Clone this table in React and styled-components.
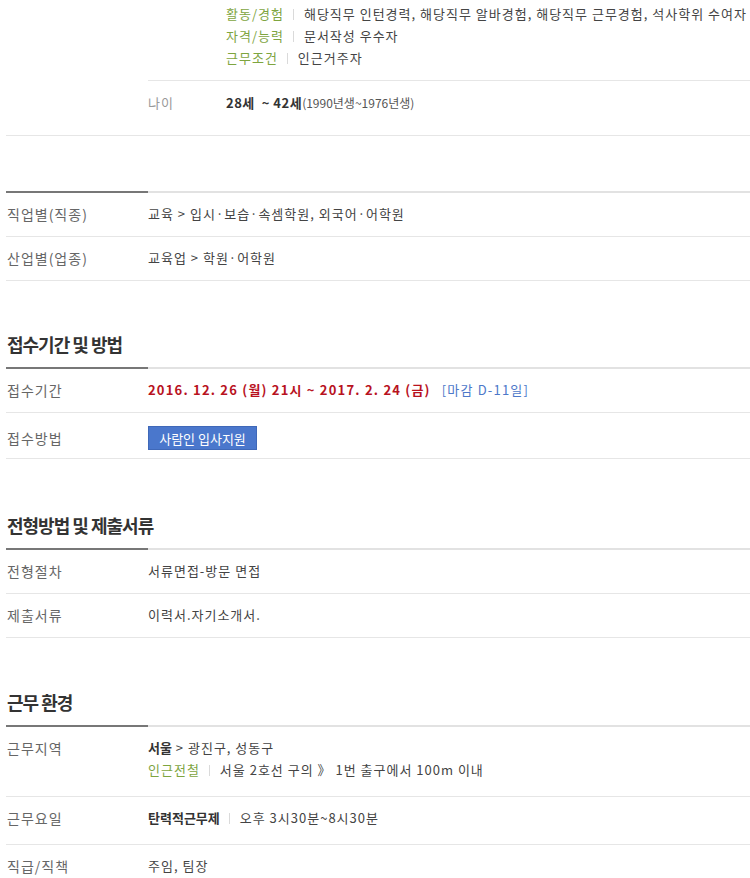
import styled, { createGlobalStyle } from "styled-components";

const Global = createGlobalStyle`
  html, body { margin: 0; padding: 0; background: #fff; }
  body {
    font-family: "Noto Sans CJK KR", "Noto Sans", sans-serif;
    font-size: 13px;
    color: #333;
  }
`;

const Page = styled.div`
  width: 744px;
  padding-left: 6px;
  overflow: hidden;
  height: 878px;
`;

const Section = styled.section`
  margin-top: ${(p) => p.$gap || 0}px;
`;

const Heading = styled.h2`
  margin: 0;
  padding: ${(p) => (p.$empty ? "0" : "0 0 16px 1px")};
  height: ${(p) => (p.$empty ? "2px" : "auto")};
  font-size: 18px;
  line-height: 18px;
  font-weight: 700;
  letter-spacing: -1px;
  color: #333;
  background: linear-gradient(to right, #777 142px, #e2e2e2 142px) bottom / 100% 2px no-repeat;
`;

const Row = styled.div`
  display: grid;
  grid-template-columns: 142px 1fr;
  align-items: ${(p) => (p.$center ? "center" : "start")};
  padding: ${(p) => p.$pt ?? 10}px 0 ${(p) => p.$pb ?? 11}px;
  border-bottom: ${(p) => (p.$last ? "none" : "1px solid #e6e6e6")};
`;

const Label = styled.div`
  font-size: 14px;
  line-height: 22px;
  letter-spacing: 1px;
  color: #666;
  padding-left: 1px;
`;

const Value = styled.div`
  line-height: 22px;
  letter-spacing: 1px;
  color: #444;
`;

const SubTable = styled.div`
  display: flex;
  flex-direction: column;
`;

const SubRow = styled.div`
  display: grid;
  grid-template-columns: 78px 1fr;
  padding: ${(p) => p.$pt ?? 10}px 0 ${(p) => p.$pb ?? 11}px;
  border-bottom: ${(p) => (p.$last ? "none" : "1px solid #e6e6e6")};
`;

const SubLabel = styled.div`
  line-height: 22px;
  letter-spacing: 1px;
  color: #999;
`;

const Line = styled.div`
  line-height: 22px;
  letter-spacing: 1px;
  color: #444;
  white-space: nowrap;
`;

const Tag = styled.span`
  color: #7ea53f;
`;

const Bar = styled.span`
  display: inline-block;
  width: 1px;
  height: 11px;
  background: #dadada;
  margin: 0 10px 0 9px;
  vertical-align: -1px;
`;

const Strong = styled.b`
  font-weight: 700;
  color: #333;
  letter-spacing: ${(p) => (p.$wide ? "0.5px" : "0")};
`;

const Small = styled.span`
  font-size: 12px;
  letter-spacing: 0;
  color: #555;
`;

const Period = styled.span`
  font-weight: 700;
  color: #b8121e;
  letter-spacing: 1.2px;
`;

const Deadline = styled.span`
  margin-left: 11px;
  color: #4d78c9;
  letter-spacing: 1.2px;
`;

const ApplyButton = styled.button`
  height: 24px;
  width: 109px;
  padding: 0;
  border: 1px solid #3f68b8;
  background: #4a77cc;
  color: #fff;
  font-family: inherit;
  font-size: 13px;
  cursor: pointer;
`;

function Tagged({ tag, children }) {
  return (
    <Line>
      <Tag>{tag}</Tag>
      <Bar />
      {children}
    </Line>
  );
}

export default function App() {
  return (
    <Page>
      <Global />
      <Section>
        <Row $pt={0} $pb={0}>
          <div />
          <SubTable>
            <SubRow $pt={3} $pb={11}>
              <div />
              <div>
                <Tagged tag="활동/경험">해당직무 인턴경력, 해당직무 알바경험, 해당직무 근무경험, 석사학위 수여자</Tagged>
                <Tagged tag="자격/능력">문서작성 우수자</Tagged>
                <Tagged tag="근무조건">인근거주자</Tagged>
              </div>
            </SubRow>
            <SubRow $last $pt={11} $pb={21}>
              <SubLabel>나이</SubLabel>
              <Line>
                <Strong $wide>28세 &nbsp;~ 42세</Strong>
                <Small>(1990년생~1976년생)</Small>
              </Line>
            </SubRow>
          </SubTable>
        </Row>
      </Section>

      <Section $gap={55}>
        <Heading $empty />
        <Row>
          <Label>직업별(직종)</Label>
          <Value>교육 &gt; 입시·보습·속셈학원, 외국어·어학원</Value>
        </Row>
        <Row>
          <Label>산업별(업종)</Label>
          <Value>교육업 &gt; 학원·어학원</Value>
        </Row>
      </Section>

      <Section $gap={54}>
        <Heading>접수기간 및 방법</Heading>
        <Row>
          <Label>접수기간</Label>
          <Value>
            <Period>2016. 12. 26 (월) 21시 ~ 2017. 2. 24 (금)</Period>
            <Deadline>[마감 D-11일]</Deadline>
          </Value>
        </Row>
        <Row $center $pt={13} $pb={8}>
          <Label>접수방법</Label>
          <div>
            <ApplyButton>사람인 입사지원</ApplyButton>
          </div>
        </Row>
      </Section>

      <Section $gap={57}>
        <Heading>전형방법 및 제출서류</Heading>
        <Row>
          <Label>전형절차</Label>
          <Value>서류면접-방문 면접</Value>
        </Row>
        <Row>
          <Label>제출서류</Label>
          <Value>이력서.자기소개서.</Value>
        </Row>
      </Section>

      <Section $gap={55}>
        <Heading>근무 환경</Heading>
        <Row $pb={15}>
          <Label>근무지역</Label>
          <Value>
            <Line>
              <Strong>서울</Strong> &gt; 광진구, 성동구
            </Line>
            <Tagged tag="인근전철">서울 2호선 구의 》 1번 출구에서 100m 이내</Tagged>
          </Value>
        </Row>
        <Row $pb={15}>
          <Label>근무요일</Label>
          <Value>
            <Line>
              <Strong>탄력적근무제</Strong>
              <Bar />
              오후 3시30분~8시30분
            </Line>
          </Value>
        </Row>
        <Row $last>
          <Label>직급/직책</Label>
          <Value>주임, 팀장</Value>
        </Row>
      </Section>
    </Page>
  );
}
